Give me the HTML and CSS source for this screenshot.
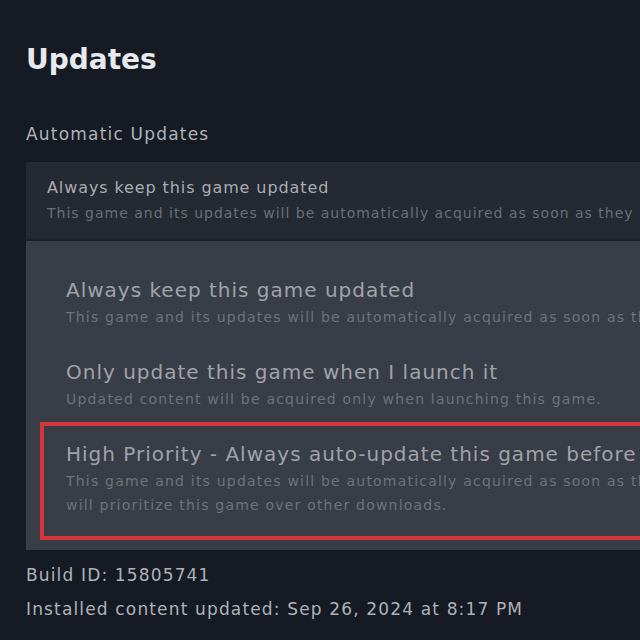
FILE: index.html
```html
<!DOCTYPE html>
<html lang="en">
<head>
    <meta charset="UTF-8">
    <title>Updates</title>
    <link rel="stylesheet" href="styles.css">
</head>
<body>
    <div class="page">
        <h1 class="title">Updates</h1>
        <div class="section-label">Automatic Updates</div>

        <div class="dropdown">
            <div class="dropdown-current">
                <div class="current-title">Always keep this game updated</div>
                <div class="current-desc">This game and its updates will be automatically acquired as soon as they become available.</div>
            </div>
            <div class="dropdown-menu">
                <div class="option">
                    <div class="option-title">Always keep this game updated</div>
                    <div class="option-desc">This game and its updates will be automatically acquired as soon as they become available.</div>
                </div>
                <div class="option">
                    <div class="option-title">Only update this game when I launch it</div>
                    <div class="option-desc">Updated content will be acquired only when launching this game.</div>
                </div>
                <div class="option highlighted">
                    <div class="option-title">High Priority - Always auto-update this game before others</div>
                    <div class="option-desc">This game and its updates will be automatically acquired as soon as they become available. Steam<br>will prioritize this game over other downloads.</div>
                </div>
            </div>
        </div>

        <div class="info build">Build ID: 15805741</div>
        <div class="info">Installed content updated: Sep 26, 2024 at 8:17 PM</div>
    </div>
</body>
</html>
```

FILE: styles.css
```css
html, body {
    margin: 0;
    height: 100%;
    overflow: hidden;
}

body {
    background-color: #161b23;
    font-family: 'DejaVu Sans', sans-serif;
}

.page {
    width: 1000px;
    padding: 40px 0 0 26px;
}

.title {
    margin: 0;
    font-size: 28px;
    font-weight: bold;
    color: #e6eaee;
    line-height: 40px;
}

.section-label {
    margin-top: 44px;
    font-size: 17px;
    letter-spacing: 1.2px;
    color: #aeb3b9;
    line-height: 20px;
}

.dropdown {
    margin-top: 18px;
}

.dropdown-current {
    background-color: #252932;
    padding: 14px 21px 13px;
    border-bottom: 2px solid #1c2028;
    white-space: nowrap;
}

.current-title {
    font-size: 16px;
    letter-spacing: 0.9px;
    line-height: 24px;
    color: #a9adb3;
}

.current-desc {
    font-size: 14px;
    letter-spacing: 1px;
    line-height: 26px;
    color: #6a6f78;
}

.dropdown-menu {
    background-color: #393d47;
    padding: 34px 0 10px 14px;
    white-space: nowrap;
}

.option {
    padding-left: 26px;
    margin-bottom: 28px;
}

.option-title {
    font-size: 20px;
    letter-spacing: 1px;
    line-height: 30px;
    color: #9fa3aa;
}

.option-desc {
    font-size: 14px;
    letter-spacing: 1.2px;
    line-height: 24px;
    color: #6e737c;
}

.highlighted {
    margin: -17px 0 0;
    border: 4px solid #d4363c;
    border-right: none;
    padding: 13px 0 19px 22px;
}

.info {
    margin-top: 12px;
    font-size: 17px;
    letter-spacing: 1.15px;
    line-height: 22px;
    color: #aeb2b8;
}

.build {
    margin-top: 14px;
}
```
